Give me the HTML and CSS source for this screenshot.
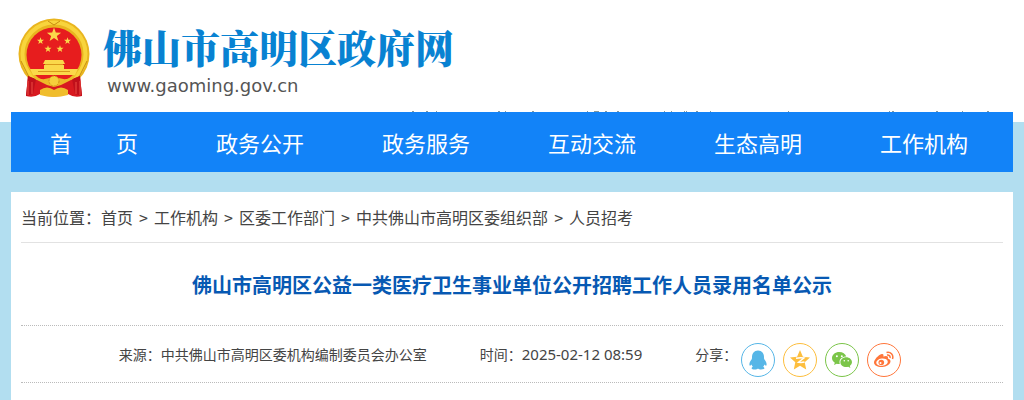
FILE: index.html
```
<!DOCTYPE html>
<html lang="zh-CN">
<head>
    <meta charset="UTF-8">
    <meta name="viewport" content="width=device-width, initial-scale=1.0">
    <title>佛山市高明区公益一类医疗卫生事业单位公开招聘工作人员录用名单公示</title>
    <link rel="stylesheet" href="styles.css">
</head>
<body>
    <header class="header">
        <a class="brand" href="#">
            <svg class="emblem" viewBox="0 0 72 80" aria-hidden="true">
                <defs>
                    <path id="star" d="M0-10 2.4-3.2 9.5-3.1 3.8 1.2 5.9 8.1 0 4-5.9 8.1-3.8 1.2-9.5-3.1-2.4-3.2z"/>
                </defs>
                <circle cx="36" cy="36" r="35.5" fill="#e9b51f"/>
                <circle cx="36" cy="36" r="31.5" fill="none" stroke="#f8d43c" stroke-width="4"/>
                <path d="M3 43l10 20M69 43 59 63M30 3l6 4 6-4" fill="none" stroke="#c88d12" stroke-width="1"/>
                <circle cx="36" cy="37" r="27.5" fill="#e71d1e"/>
                <g fill="#fbd84a">
                    <use href="#star" transform="translate(36 17) scale(.75)"/>
                    <use href="#star" transform="translate(22.5 23) scale(.37)"/>
                    <use href="#star" transform="translate(49.5 23) scale(.37)"/>
                    <use href="#star" transform="translate(30 31) scale(.37)"/>
                    <use href="#star" transform="translate(42 31) scale(.37)"/>
                    <path d="M27 42h18l2 4H25zM26 47h20v3h0v4H26v-4h0z"/>
                    <path d="M12 51h48l-3 6H15z"/>
                </g>
                <path d="M27 46.5h18M20 53.5h32" stroke="#d99a1b"/>
                <path d="M10 58q14 8 26 1 12 7 26-1l2 20q-8 2-14-2-14 5-28 0-6 4-14 2z" fill="#d81920"/>
                <path d="M10 58l-2 20 7-2 3-15zM62 58l2 20-7-2-3-15z" fill="#c0101b"/>
                <path d="M12 54q10 12 24 4 14 8 24-4l-5 7-12 6-7 2-7-2-12-6z" fill="#edb928"/>
                <path d="M22 72q7-5 14 0 7-5 14 0v5q-14 4-28 0z" fill="#f0bd2c"/>
                <circle cx="36" cy="63" r="5" fill="#f6cf3c" stroke="#d39118" stroke-width="1" stroke-dasharray="2 1"/>
                <path d="M10 63v14M14 64v12M58 64v12M62 63v14" stroke="#ee4b43"/>
            </svg>
            <span class="brand-text">
                <span class="brand-name">佛山市高明区政府网</span>
                <span class="brand-url">www.gaoming.gov.cn</span>
            </span>
        </a>
        <!-- upper edge of the row tucked behind the nav -->
        <svg class="nav-edge" viewBox="0 0 1024 1" aria-hidden="true">
            <path d="M412 .5h2M426 .5h2M436 .5h1M498 .5h2M505 .5h1M532 .5h2M587 .5h1M594 .5h5M605 .5h2M617 .5h2M664 .5h1M671 .5h1M684 .5h1M686 .5h1M696 .5h2M710 .5h1M788 .5h1M889 .5h1M892 .5h2M936 .5h2M962 .5h1M987 .5h2"/>
        </svg>
    </header>

    <div class="page">
        <nav class="nav">
            <a href="#">首　　页</a>
            <a href="#">政务公开</a>
            <a href="#">政务服务</a>
            <a href="#">互动交流</a>
            <a href="#">生态高明</a>
            <a href="#">工作机构</a>
        </nav>

        <main class="content">
            <div class="crumbs">
                <span>当前位置：</span>
                <a href="#">首页</a><span class="sep">&gt;</span>
                <a href="#">工作机构</a><span class="sep">&gt;</span>
                <a href="#">区委工作部门</a><span class="sep">&gt;</span>
                <a href="#">中共佛山市高明区委组织部</a><span class="sep">&gt;</span>
                <a href="#">人员招考</a>
            </div>

            <h1 class="title">佛山市高明区公益一类医疗卫生事业单位公开招聘工作人员录用名单公示</h1>

            <div class="meta">
                <span class="source">来源：中共佛山市高明区委机构编制委员会办公室</span>
                <span class="time">时间：<time datetime="2025-02-12T08:59">2025-02-12 08:59</time></span>
                <div class="share">
                    <span class="share-label">分享：</span>
                    <div class="share-links">
                        <a class="share-link qq" href="#" aria-label="QQ">
                            <svg viewBox="0 0 20 20"><path d="M10 .5c4 0 6 3 6 6.500 0 1 0 1.500.3 2.200 1.500 1.800 2.700 4 2.200 6-.3.9-1.400.3-2-.7-.3 1-.7 1.700-1.300 2.300 2.500 1.500.8 2.700-2 2.700-1.500 0-2.500-.4-3.200-1-.7.6-1.700 1-3.200 1-2.800 0-4.500-1.200-2-2.700-.6-.6-1-1.300-1.300-2.300-.6 1-1.700 1.600-2 .7-.5-2 .7-4.200 2.200-6C4 8.500 4 8 4 7 4 3.500 6 .5 10 .5z"/></svg>
                        </a>
                        <a class="share-link qzone" href="#" aria-label="QQ空间">
                            <svg viewBox="0 0 20 20"><path d="M10 0l2.900 6.700 7.100.7-5.300 4.900 1.500 7.200L10 15.800l-6.200 3.700 1.500-7.200L0 7.400l7.100-.7z"/><path class="cut" d="M6 8.300q4-1 8-.3L8.500 12.300q3.500.4 6-.3"/></svg>
                        </a>
                        <a class="share-link wechat" href="#" aria-label="微信">
                            <svg viewBox="0 0 20 20"><path d="M7.300 2C3.200 2 0 4.700 0 8c0 2 1.100 3.600 2.800 4.700L2 15l2.700-1.300q1.500.4 3.100.3A5.700 5.700 0 0 1 7.500 12c0-3.200 3-5.500 6.800-5.500C13.500 3.800 10.700 2 7.300 2z"/><path d="M20 12.200c0-2.700-2.600-4.900-5.800-4.900s-5.800 2.200-5.800 4.900 2.600 4.900 5.800 4.900q1 0 2-.3l2.200 1.200-.6-2q2.200-1.500 2.200-3.800z"/><g fill="#fff"><circle cx="4.900" cy="6.300" r="1"/><circle cx="9.800" cy="6.300" r="1"/><circle cx="12.300" cy="10.700" r=".8"/><circle cx="16.200" cy="10.700" r=".8"/></g></svg>
                        </a>
                        <a class="share-link weibo" href="#" aria-label="微博">
                            <svg viewBox="0 0 20 20"><path d="M7.700 4C9.300 3.500 9.900 4.800 9.300 6.500c2.800-1.100 5.400-.7 4.600 1.900 5 1.300 2.700 7.700-5.500 8.600C4 17.400 0 15.500 0 12.500 0 9.800 4.300 5 7.700 4z"/><ellipse cx="8" cy="12.200" rx="5.800" ry="3.700" fill="#fff" transform="rotate(-8 8 12)"/><circle cx="7.300" cy="12.500" r="2.800"/><circle cx="6.500" cy="13" r="1" fill="#fff"/><path class="wave" d="M12.500 2.400c4-1 7.400 2.300 6 6.500M13 5c2-.3 3.400 1 3 3"/></svg>
                        </a>
                    </div>
                </div>
            </div>
        </main>
    </div>
</body>
</html>
```
FILE: styles.css
```
* {
    box-sizing: border-box;
}
body {
    margin: 0;
    background: linear-gradient(#fff 122px, #b2def0 122px, #b2def0);
    color: #444;
    font-family: "Noto Sans CJK SC", sans-serif;
    font-size: 16px;
}
a {
    color: inherit;
    text-decoration: none;
}
.header {
    display: flex;
    flex-direction: column;
    justify-content: space-between;
    height: 112px;
    padding-top: 18px;
}
.brand {
    display: flex;
    gap: 13px;
    padding: 0 18px;
}
.emblem {
    width: 72px;
    height: 80px;
}
.brand-text {
    display: flex;
    flex-direction: column;
}
.brand-name {
    color: #0882d2;
    font-family: "Noto Serif CJK SC", "Noto Sans CJK SC", serif;
    font-size: 39px;
    font-weight: 900;
    line-height: 56px;
}
.brand-url {
    padding-left: 4px;
    color: #555;
    font-family: "DejaVu Sans", sans-serif;
    font-size: 18px;
    line-height: 24px;
}
.nav-edge {
    display: block;
    width: 100%;
    fill: none;
    stroke: #899;
}
.page {
    margin: 0 11px;
}
.nav {
    display: flex;
    padding-right: 6px;
    background: #1283f8;
}
.nav a {
    flex: 1;
    color: #fff;
    font-size: 22px;
    line-height: 60px;
    text-align: center;
    white-space: nowrap;
}
.content {
    min-height: 208px;
    margin-top: 20px;
    padding: 0 10px;
    background: #fff;
}
.crumbs {
    display: flex;
    flex-wrap: wrap;
    border-bottom: 1px solid #e2e2e2;
    line-height: 50px;
}
.sep {
    width: 21px;
    text-align: center;
}
.title {
    margin: 0;
    padding: 23px 0 21px;
    border-bottom: 1px dotted #bbb;
    color: #0759b3;
    font-size: 20px;
    line-height: 38px;
    text-align: center;
}
.meta {
    display: flex;
    justify-content: center;
    gap: 53px;
    padding-right: 4px;
    border-bottom: 1px dotted #bbb;
    font-size: 14px;
    line-height: 56px;
}
.meta time {
    font-family: "Noto Sans", sans-serif;
    font-size: 15px;
}
.share {
    display: flex;
    gap: 4px;
}
.share-links {
    display: flex;
    gap: 8px;
    padding-top: 17px;
}
.share-link {
    display: flex;
    align-items: center;
    justify-content: center;
    width: 34px;
    height: 34px;
    border: 1px solid currentColor;
    border-radius: 50%;
}
.share-link svg {
    width: 20px;
    height: 20px;
    fill: currentColor;
}
.qq {
    color: #56b6e7;
}
.qzone {
    color: #fdbe3d;
}
.wechat {
    color: #7bc549;
}
.weibo {
    color: #ff763b;
}
.cut {
    fill: none;
    stroke: #fff;
    stroke-width: 1.4;
}
.wave {
    fill: none;
    stroke: currentColor;
    stroke-width: 1.5;
}
```
